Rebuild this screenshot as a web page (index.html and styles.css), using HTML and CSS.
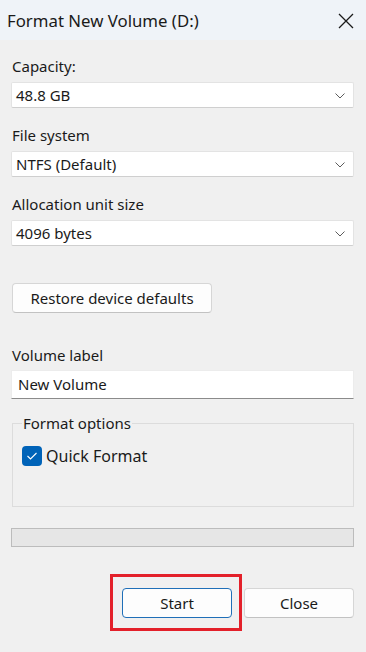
FILE: index.html
```
<!DOCTYPE html>
<html>
<head>
<meta charset="utf-8">
<link rel="stylesheet" href="styles.css">
</head>
<body>
<div class="window">
  <div class="titlebar">
    <span class="title">Format New Volume (D:)</span>
    <svg class="close-x" width="16" height="16" viewBox="0 0 16 16"><path d="M1 1 L15 15 M15 1 L1 15" stroke="#1a1a1a" stroke-width="1.3" fill="none"/></svg>
  </div>
  <div class="content">
    <div class="label first">Capacity:</div>
    <div class="select"><span>48.8 GB</span><svg class="chev" width="10" height="6" viewBox="0 0 10 6"><path d="M0.5 0.5 L5 5 L9.5 0.5" stroke="#5c5c5c" stroke-width="1" fill="none"/></svg></div>
    <div class="label">File system</div>
    <div class="select"><span>NTFS (Default)</span><svg class="chev" width="10" height="6" viewBox="0 0 10 6"><path d="M0.5 0.5 L5 5 L9.5 0.5" stroke="#5c5c5c" stroke-width="1" fill="none"/></svg></div>
    <div class="label">Allocation unit size</div>
    <div class="select"><span>4096 bytes</span><svg class="chev" width="10" height="6" viewBox="0 0 10 6"><path d="M0.5 0.5 L5 5 L9.5 0.5" stroke="#5c5c5c" stroke-width="1" fill="none"/></svg></div>
    <div class="btn restore">Restore device defaults</div>
    <div class="label vol">Volume label</div>
    <div class="input">New Volume</div>
    <fieldset class="group">
      <legend>Format options</legend>
      <div class="check-row">
        <span class="checkbox"><svg width="12" height="10" viewBox="0 0 12 10"><path d="M1.5 5 L4.5 8 L10.5 2" stroke="#fff" stroke-width="1.1" fill="none"/></svg></span>
        <span>Quick Format</span>
      </div>
    </fieldset>
    <div class="progress"></div>
    <div class="actions">
      <div class="start-wrap">
        <div class="btn action primary">Start</div>
        <div class="highlight"></div>
      </div>
      <div class="btn action">Close</div>
    </div>
  </div>
</div>
</body>
</html>
```
FILE: styles.css
```
* { box-sizing: border-box; }
html, body { margin: 0; padding: 0; }
body {
  width: 366px;
  height: 652px;
  background: #f0f0f0;
  font-family: "Noto Sans", "Open Sans", sans-serif;
  font-size: 15px;
  color: #1a1a1a;
  overflow: hidden;
}
.titlebar {
  height: 40px;
  background: #eff3f8;
  display: flex;
  align-items: center;
  justify-content: space-between;
  padding: 0 12px 0 7px;
}
.title { font-size: 16.8px; color: #1a1a1a; }
.close-x { margin-top: 1px; }
.content {
  padding: 0 12px 0 11px;
  display: flex;
  flex-direction: column;
}
.label {
  height: 20px;
  line-height: 20px;
  margin-top: 17px;
  padding-left: 1px;
}
.label.first { margin-top: 16px; }
.select {
  margin-top: 6px;
  height: 26px;
  background: #fff;
  border: 1px solid #e3e3e3;
  border-bottom-color: #cfcfcf;
  border-radius: 2px;
  display: flex;
  align-items: center;
  justify-content: space-between;
  padding: 0 8px 0 4px;
}
.select span { line-height: 24px; }
.chev { margin-top: 1px; }
.btn {
  background: #fdfdfd;
  border: 1px solid #d6d6d6;
  border-bottom-color: #c2c2c2;
  border-radius: 4px;
  display: flex;
  align-items: center;
  justify-content: center;
}
.restore {
  margin-top: 37px;
  margin-left: 1px;
  width: 200px;
  height: 30px;
}
.label.vol { margin-top: 32px; }
.input {
  margin-top: 5px;
  height: 29px;
  background: #fff;
  border: 1px solid #ececec;
  border-bottom: 1px solid #8b8b8b;
  padding-left: 6px;
  line-height: 26px;
}
.group {
  margin: 14px 0 0 1px;
  padding: 0 0 0 9px;
  border: 1px solid #dcdcdc;
  height: 94px;
  min-width: 0;
}
.group legend {
  padding: 0 1px;
  line-height: 20px;
}
.check-row {
  display: flex;
  align-items: center;
  gap: 4px;
  margin-top: 12px;
  font-size: 16px;
}
.checkbox {
  width: 20px;
  height: 20px;
  background: #0063b8;
  border-radius: 4px;
  display: flex;
  align-items: center;
  justify-content: center;
}
.progress {
  margin-top: 21px;
  height: 19px;
  background: #e6e6e6;
  border: 1px solid #bcbcbc;
}
.actions {
  margin-top: 41px;
  display: flex;
  justify-content: flex-end;
  gap: 12px;
}
.start-wrap { position: relative; }
.action {
  width: 110px;
  height: 30px;
}
.primary {
  border: 1px solid #1f6fb8;
}
.highlight {
  position: absolute;
  left: -12px;
  top: -14px;
  right: -10px;
  bottom: -13px;
  border: 3px solid #e3202a;
}
```
